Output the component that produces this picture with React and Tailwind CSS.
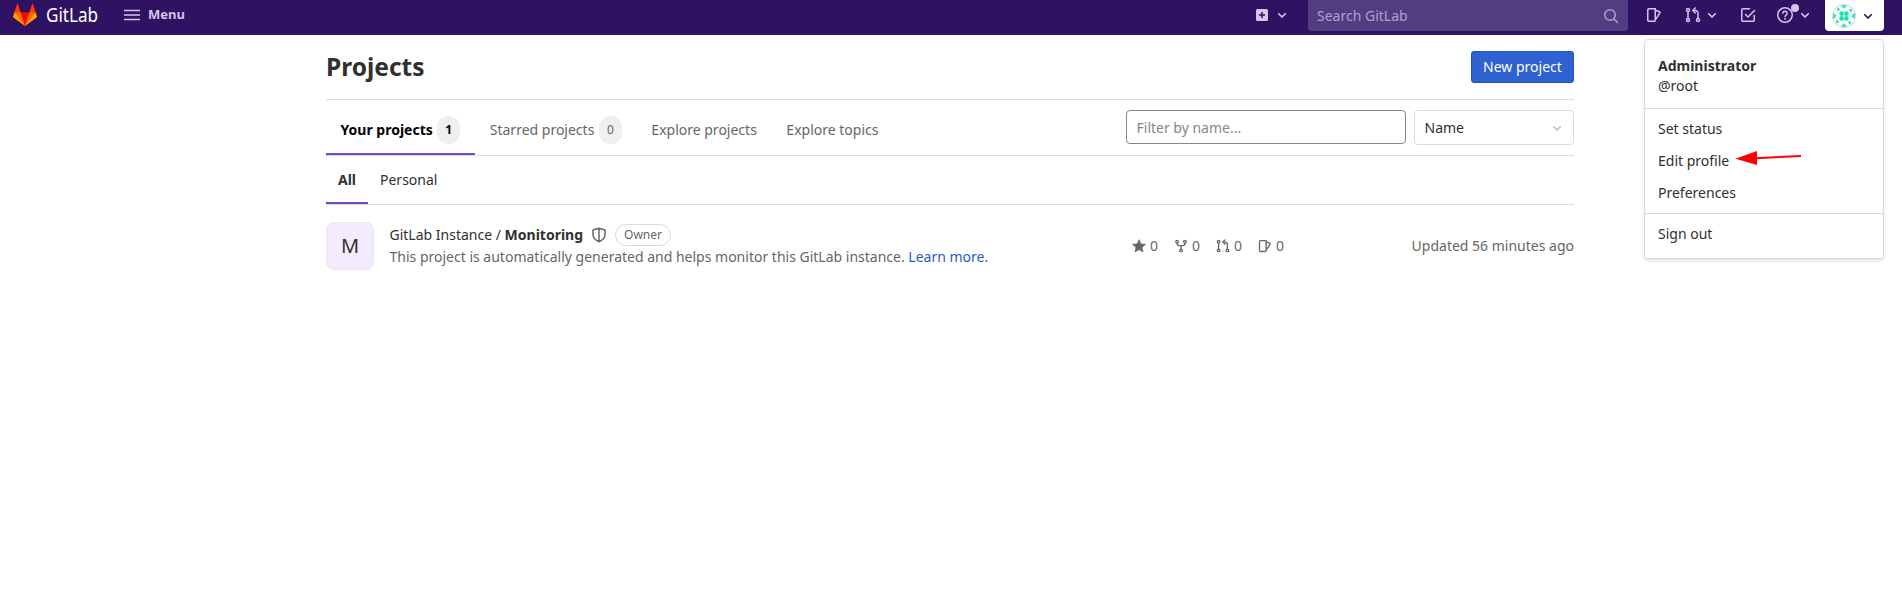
import React from "react";

function Icon({ size = 16, className = "", children }) {
  return (
    <svg
      width={size}
      height={size}
      viewBox="0 0 16 16"
      fill="none"
      stroke="currentColor"
      strokeWidth="1.5"
      className={"block shrink-0 " + className}
    >
      {children}
    </svg>
  );
}

function Chevron({ className }) {
  return (
    <Icon className={className}>
      <path d="M4.75 6.75 8 10l3.25-3.25" strokeWidth="1.7" strokeLinecap="round" strokeLinejoin="round" />
    </Icon>
  );
}

function Issues({ size, className }) {
  return (
    <Icon size={size} className={className}>
      <path d="M1.75 3A1.25 1.25 0 0 1 3 1.75h6.25V13A1.25 1.25 0 0 1 8 14.25H3A1.25 1.25 0 0 1 1.75 13z" />
      <path d="M9.25 3.2l4.1 1.5a.9.9 0 0 1 .55 1.2L9.5 12.6" strokeLinejoin="round" />
    </Icon>
  );
}

function MergeRequest({ size, className }) {
  return (
    <Icon size={size} className={className}>
      <circle cx="3" cy="3" r="1.5" />
      <circle cx="3" cy="13" r="1.5" />
      <circle cx="13" cy="13" r="1.5" />
      <path d="M3 4.5v7M13 11.5V6a2.5 2.5 0 0 0-2.5-2.5H8.2" />
      <path d="M10.3 1 7.8 3.5 10.3 6" strokeLinecap="round" strokeLinejoin="round" />
    </Icon>
  );
}

function Fork({ size, className }) {
  return (
    <Icon size={size} className={className}>
      <circle cx="3.5" cy="3" r="1.5" />
      <circle cx="12.5" cy="3" r="1.5" />
      <circle cx="8" cy="13" r="1.5" />
      <path d="M3.5 4.5v.7A2.3 2.3 0 0 0 5.8 7.5h4.4a2.3 2.3 0 0 0 2.3-2.3v-.7M8 7.5v4" />
    </Icon>
  );
}

function Star({ size, className }) {
  return (
    <Icon size={size} className={className}>
      <path
        d="M8 .8l2.1 4.8 5.3.5-4 3.5 1.2 5.2L8 12.1l-4.6 2.7 1.2-5.2-4-3.5 5.3-.5z"
        fill="currentColor"
        stroke="currentColor"
        strokeWidth="0.8"
        strokeLinejoin="round"
      />
    </Icon>
  );
}

function Tanuki() {
  return (
    <svg width="24" height="24" viewBox="0 0 36 36" className="block shrink-0">
      <path fill="#fb3a10" d="M2 14l9.38 9v-9l-4-12.28c-.205-.632-1.176-.632-1.38 0z" />
      <path fill="#fb3a10" d="M34 14l-9.38 9v-9l4-12.28c.205-.632 1.176-.632 1.38 0z" />
      <path fill="#ea0f00" d="M18 34.38 3 14h30z" />
      <path fill="#ff6a00" d="M18 34.38 11.38 14H2l4 11z" />
      <path fill="#ff6a00" d="M18 34.38 24.62 14H34l-4 11z" />
      <path fill="#ffa000" d="M2 14 .1 20.16c-.18.565 0 1.2.5 1.56L18 34.38z" />
      <path fill="#ffa000" d="M34 14l1.9 6.16c.18.565 0 1.2-.5 1.56L18 34.38z" />
    </svg>
  );
}

function Identicon() {
  const quarter = (
    <>
      <circle cx="9.6" cy="9.6" r="2.3" />
      <path d="M9 1.2 11.8 1l-.2 3.600zM5 3.600l3.400 1.600L5.400 7.400zM1.200 9.200l3.600 2.600-3.400 1z" />
    </>
  );
  return (
    <svg width="24" height="24" viewBox="0 0 24 24" className="block shrink-0">
      <circle cx="12" cy="12" r="11.500" fill="#fbfafd" stroke="#d5d0e8" />
      <g fill="#12e8a6">
        {quarter}
        <g transform="rotate(90 12 12)">{quarter}</g>
        <g transform="rotate(180 12 12)">{quarter}</g>
        <g transform="rotate(270 12 12)">{quarter}</g>
      </g>
    </svg>
  );
}

function Navbar() {
  return (
    <header className="flex h-[35px] items-start bg-[#2f1262] text-[#d1c7ee]">
      <div className="flex h-[30px] w-full items-center pl-[13px] pr-[18px]">
        <Tanuki />
        <span className="ml-[9px] w-[53px] origin-left scale-x-[0.9] pb-px text-[19px] leading-6 text-white">
          GitLab
        </span>
        <svg width="16" height="12" viewBox="0 0 16 12" className="ml-[25px] shrink-0">
          <path d="M0 1.5h16M0 6h16M0 10.5h16" stroke="currentColor" strokeWidth="1.3" />
        </svg>
        <span className="ml-2 pb-[2px] text-[13px] font-bold leading-4">Menu</span>

        <div className="ml-auto flex h-[30px] items-center">
          <Icon>
            <path
              fillRule="evenodd"
              stroke="none"
              fill="currentColor"
              d="M3.5 2h9A1.5 1.5 0 0 1 14 3.5v9a1.5 1.5 0 0 1-1.5 1.5h-9A1.5 1.5 0 0 1 2 12.5v-9A1.5 1.5 0 0 1 3.5 2zM7.25 5v2.25H5v1.5h2.25V11h1.5V8.75H11v-1.5H8.75V5z"
            />
          </Icon>
          <Chevron className="ml-1" />
          <div className="ml-[18px] flex h-[31px] w-[320px] items-center justify-between self-start rounded-b bg-[#523d80] pl-[9px] pr-[9px]">
            <span className="text-sm text-[#aea1cf]">Search GitLab</span>
            <Icon className="text-[#aea1cf]">
              <circle cx="7" cy="7" r="5.25" />
              <path d="m11 11 3.5 3.5" strokeLinecap="round" />
            </Icon>
          </div>
          <Issues className="ml-[18px]" />
          <MergeRequest className="ml-[23px]" />
          <Chevron className="ml-[3px]" />
          <Icon className="ml-5">
            <path d="M9.5 1.75H3A1.25 1.25 0 0 0 1.75 3v10A1.25 1.25 0 0 0 3 14.25h10A1.25 1.25 0 0 0 14.25 13V8.5" strokeLinecap="round" />
            <path d="m5.5 7.5 2.5 2.5 6.5-6.5" strokeLinecap="round" strokeLinejoin="round" />
          </Icon>
          <div className="relative ml-[21px]">
            <Icon>
              <circle cx="8" cy="8" r="7.25" />
              <path d="M5.9 6.3a2.1 2.1 0 1 1 3.2 1.8C8.4 8.5 8 8.8 8 9.5" strokeLinecap="round" />
              <circle cx="8" cy="11.7" r="0.95" fill="currentColor" stroke="none" />
            </Icon>
            <span className="absolute -top-[3px] left-[14px] size-2 rounded-full bg-[#d1c7ee]" />
          </div>
          <Chevron className="ml-1" />
          <div className="ml-3 flex h-[31px] w-[59px] items-center self-start rounded-b bg-white pl-[7px] text-[#2f1262]">
            <Identicon />
            <Chevron className="ml-1" />
          </div>
        </div>
      </div>
    </header>
  );
}

function Tab({ label, count, active }) {
  return (
    <div
      className={
        "flex h-[55px] items-center border-b-2 pl-[14.5px] pr-[15px] pt-[7px] text-sm " +
        (active ? "border-[#7548c8] font-bold text-black" : "border-transparent text-[#666666]")
      }
    >
      {label}
      {count !== undefined && (
        <span className="ml-[4.5px] flex h-7 w-[23px] items-center justify-center rounded-[12px] bg-[#efefef] text-xs">
          {count}
        </span>
      )}
    </div>
  );
}

function Stat({ icon: StatIcon, value }) {
  return (
    <div className="flex w-[42px] items-center gap-1">
      <StatIcon size={14} />
      <span>{value}</span>
    </div>
  );
}

function ProjectRow() {
  return (
    <div className="flex h-12 items-center text-sm text-[#666666]">
      <div className="flex size-12 shrink-0 items-center justify-center rounded-[8px] border border-[#ebe4f2] bg-[#f4ecfe] text-[20px] text-[#303030]">
        M
      </div>
      <div className="ml-[15.5px] w-[742.5px]">
        <div className="flex h-[22px] items-center text-[#303030]">
          <span>
            GitLab Instance / <b>Monitoring</b>
          </span>
          <Icon className="ml-2 text-[#666666]">
            <path d="M8 1.25 14 3v4.5c0 3.3-2.4 5.6-6 7.25-3.6-1.65-6-3.95-6-7.25V3zM8 1.5v13" strokeLinejoin="round" />
          </Icon>
          <span className="ml-2 flex h-[22px] items-center rounded-full border border-[#dbdbdb] px-2 text-xs text-[#666666]">
            Owner
          </span>
        </div>
        <div className="h-[22px] leading-[22px]">
          This project is automatically generated and helps monitor this GitLab instance.{" "}
          <a className="text-[#1f5cca]">Learn more</a>.
        </div>
      </div>
      <Stat icon={Star} value="0" />
      <Stat icon={Fork} value="0" />
      <Stat icon={MergeRequest} value="0" />
      <Stat icon={Issues} value="0" />
      <span className="ml-auto">Updated 56 minutes ago</span>
    </div>
  );
}

function UserMenu() {
  return (
    <div className="absolute left-[1644px] top-[39px] flex h-[220px] w-[240px] flex-col rounded border border-[#dbdbdb] bg-white text-sm text-[#303030] shadow-[0_2px_4px_rgba(0,0,0,0.12)]">
      <div className="h-[69px] border-b border-[#dbdbdb] px-[13px] pt-4 leading-5">
        <div className="font-bold">Administrator</div>
        <div>@root</div>
      </div>
      <div className="h-[105px] border-b border-[#dbdbdb] px-[13px] pt-1 leading-8">
        <div>Set status</div>
        <div>Edit profile</div>
        <div>Preferences</div>
      </div>
      <div className="px-[13px] pt-1 leading-8">Sign out</div>
      <svg width="68" height="16" viewBox="0 0 68 16" className="absolute left-[90px] top-[110px]">
        <path d="M20 8.2 66 6" stroke="#ff0000" strokeWidth="2" />
        <path d="M.5 8.7 22 1v14z" fill="#ff0000" />
      </svg>
    </div>
  );
}

export default function App() {
  return (
    <div className="relative h-[589px] overflow-hidden bg-white font-['Noto_Sans',sans-serif]">
      <Navbar />
      <main className="ml-[326px] w-[1248px]">
        <div className="flex h-[65px] items-center justify-between border-b border-[#dbdbdb]">
          <h1 className="text-[24.5px] font-bold leading-8 text-[#303030]">Projects</h1>
          <button className="h-8 w-[103px] rounded bg-[#2d62d0] text-sm text-white shadow-[inset_0_0_0_1px_#1f55c4]">
            New project
          </button>
        </div>
        <div className="flex h-[56px] items-end justify-between border-b border-[#dbdbdb]">
          <div className="flex">
            <Tab label="Your projects" count={1} active />
            <Tab label="Starred projects" count={0} />
            <Tab label="Explore projects" />
            <Tab label="Explore topics" />
          </div>
          <div className="flex gap-2 self-start pt-[10px]">
            <div className="flex h-[34px] w-[280px] items-center rounded border border-[#868686] px-[9.5px] pt-[2px] text-sm text-[#868686]">
              Filter by name...
            </div>
            <div className="flex h-[35px] w-[160px] items-center justify-between rounded border border-[#dbdbdb] pl-[9.5px] pr-2 text-sm text-[#303030]">
              Name
              <Chevron className="text-[#bfbfbf]" />
            </div>
          </div>
        </div>
        <div className="flex h-[49px] items-stretch border-b border-[#dbdbdb] text-sm text-[#303030]">
          <div className="flex w-[42px] items-center justify-center border-b-2 border-[#7548c8] pt-[2px] font-bold">All</div>
          <div className="flex items-center border-b-2 border-transparent px-3 pt-[2px]">Personal</div>
        </div>
        <div className="pt-[17px]">
          <ProjectRow />
        </div>
      </main>
      <UserMenu />
    </div>
  );
}
